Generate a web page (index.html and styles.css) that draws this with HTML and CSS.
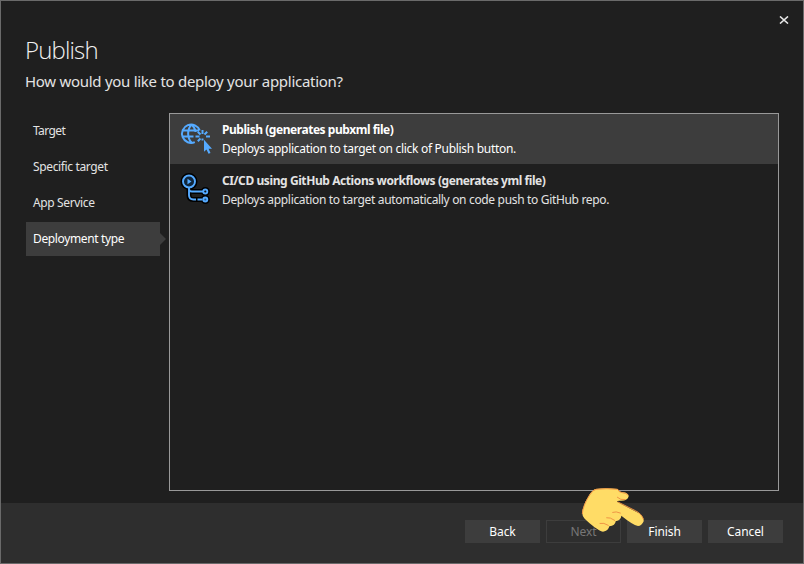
FILE: index.html
```html
<!DOCTYPE html>
<html lang="en">
<head>
<meta charset="utf-8">
<title>Publish</title>
<link rel="stylesheet" href="styles.css">
</head>
<body>
<div class="dialog">
  <button class="close" aria-label="Close"><svg width="10" height="8" viewBox="0 0 10 8"><path d="M1 .4 9 7.6M9 .4 1 7.6" stroke="#e6e6e6" stroke-width="1.5"/></svg></button>
  <header class="header">
    <h1>Publish</h1>
    <p>How would you like to deploy your application?</p>
  </header>
  <main class="main">
    <nav class="steps">
      <a class="step first">Target</a>
      <a class="step">Specific target</a>
      <a class="step">App Service</a>
      <a class="step current">Deployment type</a>
    </nav>
    <section class="options">
      <div class="option selected">
        <svg class="icon" width="32" height="32" viewBox="0 0 32 32" fill="none" stroke="#55aaff" stroke-width="2">
          <path d="M19.800 8.500A9.200 9.200 0 1 0 14.800 20.200M11.600 2.700C7 7 7 16 11.600 20.700M11.600 2.700C14 4.500 15.200 7 15.500 10M3 8.500H19M3 14.500H13.500"/>
          <path d="M22.500 8v4M22.500 16.500v2M26 14.500h4M15.500 14.500h4M17.800 9.800l2.700 2.700M27.200 9.800l-2.700 2.700M17.800 19.200l2.700-2.700"/>
          <path d="M24 17.700V29.800L26.500 27.500L28.500 31.700L30.500 30.900L28.600 26.700H32Z" fill="#55aaff" stroke="none"/>
        </svg>
        <div class="copy"><h2 class="pub">Publish (generates pubxml file)</h2><p class="pubtext">Deploys application to target on click of Publish button.</p></div>
      </div>
      <div class="option">
        <svg class="icon" width="32" height="32" viewBox="0 0 32 32" fill="none">
          <g stroke="#000" stroke-width="5" stroke-linecap="round" stroke-linejoin="round"><circle cx="9" cy="8.500" r="6"/><path d="M9 14.500v8q0 4 4 4h9M9 14.500q0 4 4 4h9"/><circle cx="25.300" cy="18.500" r="2"/><circle cx="25.300" cy="26.500" r="2"/></g>
          <circle cx="9" cy="8.500" r="6" fill="#10263b"/>
          <g stroke="#55aaff" stroke-width="1.900"><circle cx="9" cy="8.500" r="6"/><path d="M9 14.500v7.500q0 4.500 4.500 4.500h2.500M17.500 26.500h5M9 16q0 2.500 3 2.500h11"/><circle cx="25.300" cy="18.500" r="2"/><circle cx="25.300" cy="26.500" r="2" fill="#2b5680"/></g>
          <path d="M7.500 5.800v5.400L11.500 8.500z" fill="#55aaff"/>
        </svg>
        <div class="copy"><h2 class="ci">CI/CD using GitHub Actions workflows (generates yml file)</h2><p class="citext">Deploys application to target automatically on code push to GitHub repo.</p></div>
      </div>
    </section>
  </main>
  <footer class="footer">
    <button class="btn">Back</button>
    <button class="btn disabled">Next</button>
    <button class="btn">Finish</button>
    <button class="btn">Cancel</button>
  </footer>
  <svg class="hand" width="90" height="70" viewBox="0 0 270 210">
    <path d="M77 27Q105 22 143 27Q148 37 158 37Q175 38 176 49Q173 64 148 62Q141 62 141 65L207 100Q222 112 221 124Q215 138 204 138Q190 136 154 107Q154 119 137 124Q136 138 118 139Q115 154 99 155C86 152 63 134 44 116Q35 108 37 93Q42 68 59 43Q68 29 77 27Z" fill="#ffdc66"/>
    <g fill="none" stroke="#ef9545" stroke-width="3" stroke-linecap="round">
      <path d="M37 101Q38 78 59 45Q69 29 78 28Q110 24 143 28Q146 37 157 38Q169 39 174 45"/>
      <path d="M142 52Q151 61 166 59M144 66L196 92Q215 101 220 117M128 97Q138 93 151 99M110 113Q120 111 134 121M90 130Q101 127 115 136"/>
    </g>
  </svg>
</div>
</body>
</html>
```
FILE: styles.css
```css
* { box-sizing: border-box; }
body { margin: 0; background: #1f1f1f; color: #f1f1f1; font: 12px/16px "Noto Sans", "Open Sans", sans-serif; }
h1, h2, p { margin: 0; white-space: nowrap; }
button { font: inherit; color: inherit; border: 0; padding: 0; border-radius: 0; }
.dialog { position: relative; width: 804px; height: 564px; border: 1px solid #6a6a6a; display: flex; flex-direction: column; }
.close { position: absolute; right: 14px; top: 15px; width: 10px; height: 8px; background: none; }
.close svg { display: block; }
.header { height: 112px; padding: 33px 0 0 24px; }
.header h1 { font: 350 24px/32px "Open Sans", sans-serif; letter-spacing: -.85px; }
.header p { font-size: 15px; line-height: 20px; margin-top: 5px; color: #e3e3e3; letter-spacing: -.28px; }
.main { height: 390px; display: flex; padding-left: 25px; }
.steps { width: 134px; margin-right: 9px; padding-top: 1px; display: flex; flex-direction: column; gap: 2px; letter-spacing: -.36px; }
.step { height: 34px; padding: 0 7px; line-height: 34px; color: #e3e3e3; }
.first { letter-spacing: -.6px; }
.current { position: relative; background: #3d3d3d; color: #fff; }
.current::after { content: ""; position: absolute; left: 134px; top: 11px; border: solid transparent; border-width: 6px 0 6px 6px; border-left-color: #3d3d3d; }
.options { width: 610px; height: 378px; border: 1px solid #999; }
.option { height: 51px; display: flex; padding: 9px 0 0 10px; color: #e3e3e3; }
.option.selected { height: 50px; padding-top: 8px; background: #3d3d3d; color: #fff; }
.icon { margin-right: 10px; flex: none; }
.copy h2 { font-size: 12px; line-height: 16px; font-weight: 700; }
.copy .pub { letter-spacing: -.46px; }
.copy .ci { letter-spacing: -.415px; }
.copy p { margin-top: 3px; }
.copy .pubtext { letter-spacing: -.3px; }
.copy .citext { letter-spacing: -.33px; }
.footer { flex: 1; background: #2e2e2e; display: flex; justify-content: flex-end; gap: 6px; padding: 17px 20px 0 0; }
.btn { width: 75px; height: 23px; line-height: 23px; background: #3d3d3d; color: #fff; letter-spacing: -.1px; }
.btn.disabled { background: transparent; border: 1px solid #3d3d3d; color: #777; line-height: 21px; }
.hand { position: absolute; left: 569px; top: 479px; }
```
